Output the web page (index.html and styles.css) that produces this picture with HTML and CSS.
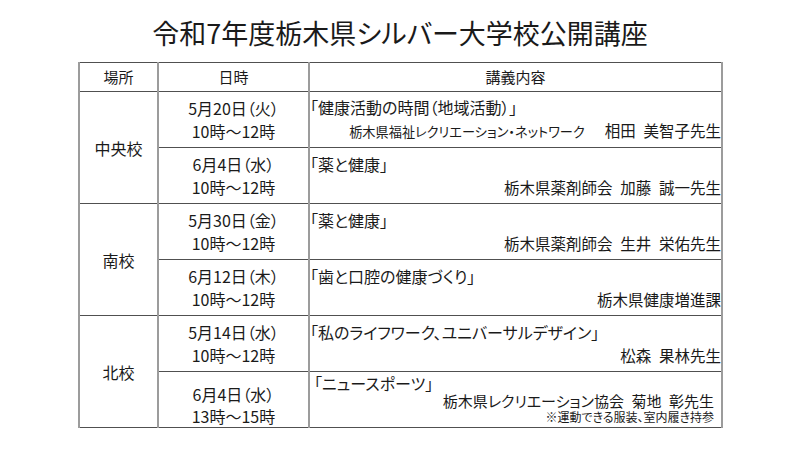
FILE: index.html
```html
<!DOCTYPE html>
<html lang="ja">
<head>
<meta charset="utf-8">
<title>令和7年度栃木県シルバー大学校公開講座</title>
<link rel="stylesheet" href="styles.css">
</head>
<body>
<h1 class="title">令和7年度栃木県シルバー大学校公開講座</h1>
<table class="schedule">
  <colgroup>
    <col class="c-place">
    <col class="c-date">
    <col class="c-lecture">
  </colgroup>
  <thead>
    <tr class="head">
      <th>場所</th>
      <th>日時</th>
      <th>講義内容</th>
    </tr>
  </thead>
  <tbody>
    <tr class="row">
      <td class="place" rowspan="2">中央校</td>
      <td class="date"><div>5月20日（火）</div><div>10時～12時</div></td>
      <td class="lecture">
        <div class="topic">「健康活動の時間（地域活動）」</div>
        <div class="by"><span class="org">栃木県福祉レクリエーション・ネットワーク</span><span class="name">相田&ensp;美智子先生</span></div>
      </td>
    </tr>
    <tr class="row">
      <td class="date"><div>6月4日（水）</div><div>10時～12時</div></td>
      <td class="lecture">
        <div class="topic">「薬と健康」</div>
        <div class="by">栃木県薬剤師会&ensp;加藤&ensp;誠一先生</div>
      </td>
    </tr>
    <tr class="row">
      <td class="place" rowspan="2">南校</td>
      <td class="date"><div>5月30日（金）</div><div>10時～12時</div></td>
      <td class="lecture">
        <div class="topic">「薬と健康」</div>
        <div class="by">栃木県薬剤師会&ensp;生井&ensp;栄佑先生</div>
      </td>
    </tr>
    <tr class="row">
      <td class="date"><div>6月12日（木）</div><div>10時～12時</div></td>
      <td class="lecture">
        <div class="topic">「歯と口腔の健康づくり」</div>
        <div class="by">栃木県健康増進課</div>
      </td>
    </tr>
    <tr class="row">
      <td class="place" rowspan="2">北校</td>
      <td class="date"><div>5月14日（水）</div><div>10時～12時</div></td>
      <td class="lecture">
        <div class="topic">「私のライフワーク、ユニバーサルデザイン」</div>
        <div class="by">松森&ensp;果林先生</div>
      </td>
    </tr>
    <tr class="row last">
      <td class="date"><div>6月4日（水）</div><div>13時～15時</div></td>
      <td class="lecture">
        <div class="topic">「ニュースポーツ」</div>
        <div class="by">栃木県レクリエーション協会&ensp;菊地&ensp;彰先生</div>
        <div class="note">※運動できる服装、室内履き持参</div>
      </td>
    </tr>
  </tbody>
</table>
</body>
</html>
```
FILE: styles.css
```css
html, body {
  margin: 0;
  padding: 0;
  background: #ffffff;
}
body {
  font-family: "Noto Sans CJK JP", "Noto Sans", sans-serif;
  color: #1a1a1a;
  font-feature-settings: "palt";
}
.title {
  margin: 0 0 8px 0;
  padding-top: 12px;
  line-height: 42px;
  font-size: 27px;
  font-weight: 400;
  text-align: center;
}
.schedule {
  margin-left: 78px;
  width: 643px;
  border-collapse: collapse;
  table-layout: fixed;
}
.c-place { width: 79px; }
.c-date { width: 151px; }
.c-lecture { width: 413px; }
.schedule th,
.schedule td {
  border-top: 1px solid #505050;
  border-bottom: 1px solid #505050;
  border-left: 2px solid #9c9c9c;
  border-right: 2px solid #9c9c9c;
  padding: 0;
}
.head {
  height: 29px;
}
.head th {
  font-size: 15px;
  font-weight: 400;
  line-height: 20px;
  text-align: center;
  vertical-align: middle;
}
.row {
  height: 56px;
}
.place {
  font-size: 16px;
  text-align: center;
  vertical-align: middle;
  padding-top: 6px;
}
.date {
  font-size: 16px;
  line-height: 23px;
  text-align: center;
  vertical-align: middle;
  padding-bottom: 6px;
}
.lecture {
  font-size: 16px;
  line-height: 23px;
  vertical-align: middle;
  padding: 0 7px 6px 4px;
}
.by {
  font-size: 15.5px;
  text-align: right;
}
.org {
  font-size: 13.2px;
  margin-right: 20px;
}
.last .date {
  vertical-align: top;
  padding: 11px 0 0 0;
  line-height: 22px;
}
.last .lecture {
  vertical-align: top;
  padding: 3px 7px 0 4px;
  line-height: 17px;
}
.last .by {
  font-size: 15px;
}
.note {
  font-size: 12px;
  line-height: 16px;
  text-align: right;
}
```
